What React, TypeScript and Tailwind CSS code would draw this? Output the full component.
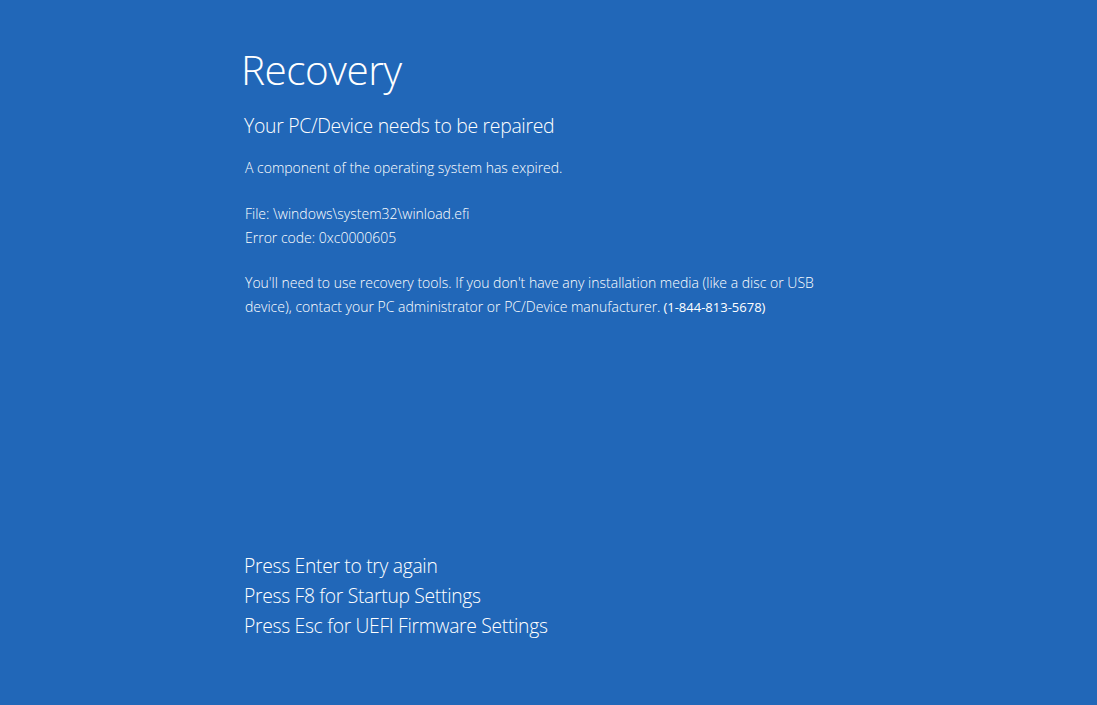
export default function App() {
  return (
    <div className="w-[1097px] h-[705px] bg-[#2167b8] text-white flex flex-col pl-[244px] overflow-hidden" style={{ fontFamily: '"Open Sans", "Noto Sans", sans-serif' }}>
      <h1 className="text-[40.5px] font-light leading-[50px] mt-[45px] -ml-[3px] tracking-[-0.5px]">Recovery</h1>
      <h2 className="text-[19.4px] font-light leading-[26px] mt-[18px] tracking-[-0.3px]">Your PC/Device needs to be repaired</h2>
      <div className="text-[14px] font-light leading-[24px] mt-[17px] pl-px">
        <p>A component of the operating system has expired.</p>
        <p className="mt-[22px]">File: \windows\system32\winload.efi</p>
        <p>Error code: 0xc0000605</p>
        <p className="mt-[21px]">You'll need to use recovery tools. If you don't have any installation media (like a disc or USB</p>
        <p>device), contact your PC administrator or PC/Device manufacturer.<span className="text-[13px] font-normal ml-[3px]">(1-844-813-5678)</span></p>
      </div>
      <div className="text-[19.3px] font-light leading-[30px] mt-[232px] tracking-[-0.3px]">
        <p>Press Enter to try again</p>
        <p>Press F8 for Startup Settings</p>
        <p>Press Esc for UEFI Firmware Settings</p>
      </div>
    </div>
  );
}
